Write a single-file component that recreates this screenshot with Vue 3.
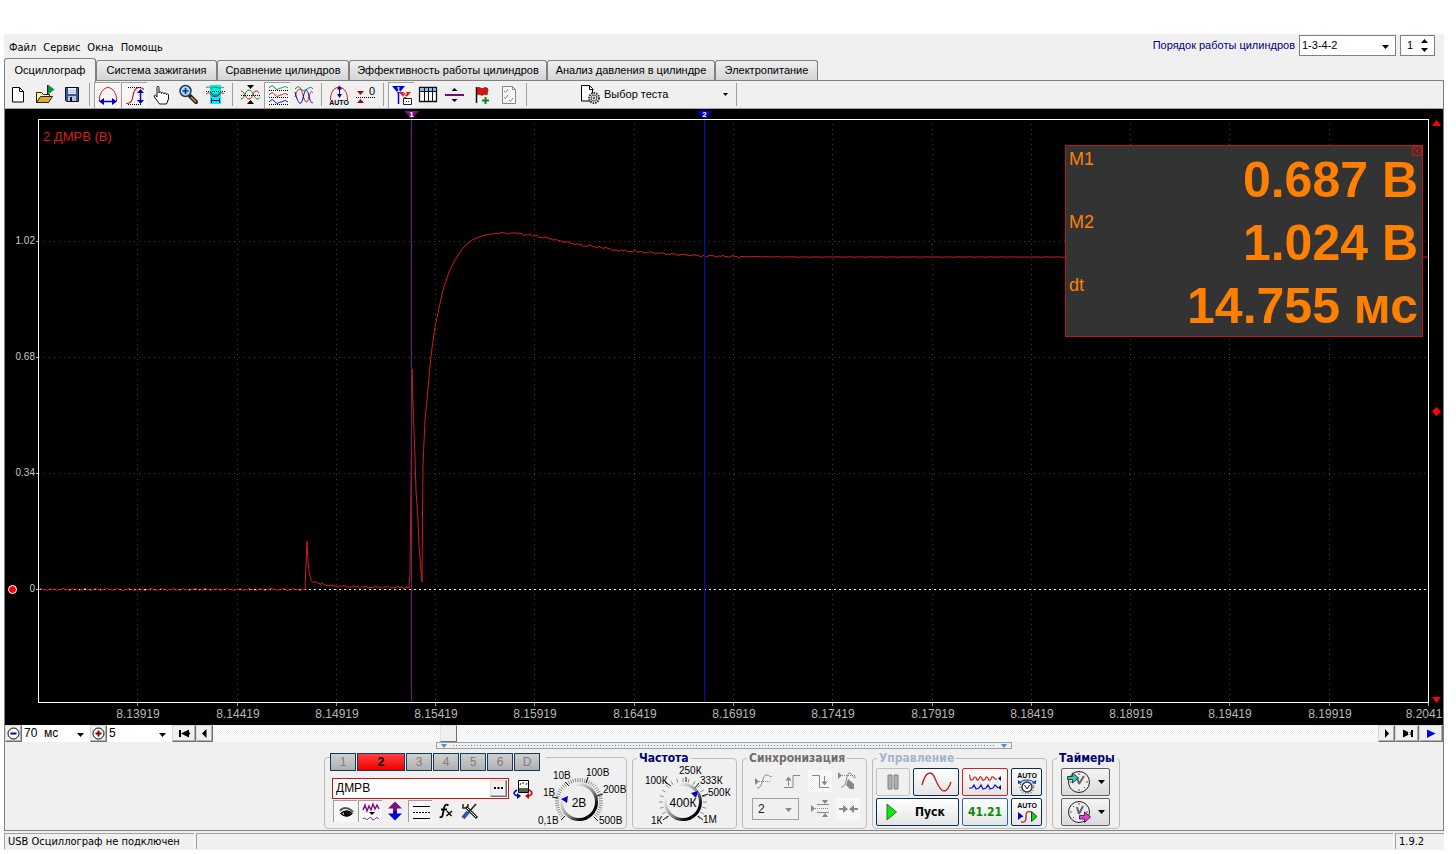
<script setup>
import { ref } from 'vue'

const menu = ['Файл', 'Сервис', 'Окна', 'Помощь']
const tabs = [
  'Осциллограф',
  'Система зажигания',
  'Сравнение цилиндров',
  'Эффективность работы цилиндров',
  'Анализ давления в цилиндре',
  'Электропитание',
]
const activeTab = ref(0)
const channels = ['1', '2', '3', '4', '5', '6', 'D']
const activeChannel = ref('2')
const channelName = ref('ДМРВ')
const cylinder = ref('1')
const scroll = ref(198)

const readings = [
  { label: 'М1', value: '0.687 В' },
  { label: 'М2', value: '1.024 В' },
  { label: 'dt', value: '14.755 мс' },
]

const gridX = [137, 237, 336, 435, 534, 634, 733, 832, 932, 1031, 1130, 1229, 1329, 1428]
const timeLabels = gridX.map((x, i) => {
  const last = i === gridX.length - 1
  return { x: last ? 1424 : x + 1, text: (8.13919 + i * 0.005).toFixed(5).slice(0, last ? 6 : 7) }
})
const levels = [
  { y: 241, text: '1.02' },
  { y: 357, text: '0.68' },
  { y: 473, text: '0.34' },
  { y: 589, text: '0' },
]

const keyPoints = [
  [39, 589.5], [305, 589.5], [306, 565], [307, 541], [308, 562], [309, 571], [311, 580], [313, 582],
  [322, 584], [332, 586], [360, 587], [409, 587.5], [410, 573], [411, 483], [412, 369], [413, 405],
  [415, 457], [416, 490], [418, 520], [419, 545], [421, 570], [422, 582], [423, 465], [425, 420],
  [427, 400], [430, 366], [432, 348], [435, 327], [439, 308], [443, 290], [449, 272], [455, 260],
  [463, 248], [472, 240], [480, 236.5], [490, 234], [495, 233], [518, 233.5], [535, 236],
  [555, 239.5], [565, 242], [583, 245.5], [602, 247.5], [615, 250], [640, 252], [670, 254],
  [705, 256], [735, 256.5], [790, 257], [1428, 257],
]

function buildTrace() {
  const out = []
  for (let k = 0; k < keyPoints.length - 1; k++) {
    const [x0, y0] = keyPoints[k]
    const [x1, y1] = keyPoints[k + 1]
    const flat = Math.abs(y1 - y0) / (x1 - x0) < 0.25
    for (let x = x0; x < x1; x += 2) {
      const y = y0 + ((y1 - y0) * (x - x0)) / (x1 - x0)
      const amp = x > 740 ? 0.3 : 1.3
      const noise = flat ? Math.sin(x * 12.9898) * Math.cos(x * 4.137) * amp : 0
      out.push(`${x},${(y + noise).toFixed(1)}`)
    }
  }
  out.push('1428,257')
  return out.join(' ')
}
const trace = buildTrace()

function ticks(cx, cy, count, r0, r1) {
  const lines = []
  for (let i = 0; i < count; i++) {
    const a = ((135 + (270 * i) / (count - 1)) * Math.PI) / 180
    lines.push({
      x1: cx + Math.cos(a) * r0,
      y1: cy + Math.sin(a) * r0,
      x2: cx + Math.cos(a) * r1,
      y2: cy + Math.sin(a) * r1,
    })
  }
  return lines
}
const voltTicks = ticks(41, 42, 46, 20, 24)
const freqTicks = ticks(45, 42, 19, 20, 24)
</script>

<template>
  <div class="page">
    <header class="menubar">
      <nav class="menu">
        <button v-for="m in menu" :key="m" type="button">{{ m }}</button>
      </nav>
      <div class="order">
        <label for="order">Порядок работы цилиндров</label>
        <span class="combo order-combo">
          <select id="order"><option>1-3-4-2</option></select>
          <svg class="caret" viewBox="0 0 7 4"><path d="M0 0h7L3.500 4z" /></svg>
        </span>
        <span class="spin">
          <input v-model="cylinder" type="text" aria-label="Цилиндр" />
          <span class="spin-buttons">
            <button type="button" aria-label="Больше"><svg viewBox="0 0 7 4"><path d="M0 4h7L3.500 0z" /></svg></button>
            <button type="button" aria-label="Меньше"><svg viewBox="0 0 7 4"><path d="M0 0h7L3.500 4z" /></svg></button>
          </span>
        </span>
      </div>
    </header>

    <div class="tabs" role="tablist">
      <button
        v-for="(t, i) in tabs" :key="t" type="button" role="tab"
        :aria-selected="i === activeTab" :class="{ active: i === activeTab }" @click="activeTab = i"
      >{{ t }}</button>
    </div>

    <main class="frame">
      <div class="toolbar">
        <div class="tools">
          <button type="button" aria-label="Новый">
            <svg viewBox="0 0 24 24"><path d="M6.500 4.500h7l4 4v10.500h-11z" fill="#fff" stroke="#000" /><path d="M13.500 4.500v4h4" fill="none" stroke="#000" /></svg>
          </button>
          <button type="button" aria-label="Открыть">
            <svg viewBox="0 0 24 24"><path d="M3.500 19.500v-10h5l2 2h6v3" fill="#fff3b0" stroke="#222" /><path d="M3.500 19.500l4-6h12l-4 6z" fill="#e0a92c" stroke="#222" /><path d="M15 2v9l6-4.500z" fill="#0a9a3c" stroke="#063" stroke-width=".6" /><path d="M14.500 2v9" stroke="#222" /></svg>
          </button>
          <button type="button" aria-label="Сохранить">
            <svg viewBox="0 0 24 24"><path d="M5.500 4.500h13v14h-12l-1-1z" fill="#3857a0" stroke="#111" /><path d="M8 5h8v6H8z" fill="#e4ecf6" /><path d="M8 7.500h8M8 9.500h8" stroke="#9ab" stroke-width=".6" /><path d="M8 13h8v5H8z" fill="#b8c2cc" /><path d="M10 14h2v4h-2z" fill="#111" /></svg>
          </button>
        </div>
        <i class="sep"></i>
        <div class="tools">
          <button class="on" type="button" aria-label="Автоширина">
            <svg viewBox="0 0 24 24"><path d="M3.500 18c0-3 0-5 1-7s3-6 7.500-6.500c4.500.500 6.500 4.500 7.500 6.500s1 4 1 7" fill="none" stroke="#d01010" /><path d="M5 18.500h14" stroke="#00f" stroke-width="1.500" /><path d="M3 18.500l5-3.500v7zM21 18.500l-5-3.500v7z" fill="#00c" /></svg>
          </button>
          <button class="on" type="button" aria-label="Автовысота">
            <svg viewBox="0 0 24 24"><path d="M3 20.500c6 0 6-3 7-8s3-8 6-8 4 1 5 2" fill="none" stroke="#d01010" stroke-width="1.200" /><path d="M5 4.500h14M5 21.500h14" stroke="#000" stroke-dasharray="1 1" /><path d="M17.500 8v11" stroke="#00f" stroke-width="1.500" /><path d="M17.500 6l-3.500 4h7zM17.500 21l-3.500-4h7z" fill="#00c" /></svg>
          </button>
          <button type="button" aria-label="Рука">
            <svg viewBox="0 0 24 24"><path d="M8 14V4.500c0-1.500 2-1.500 2 0V10c0-1.500 2.500-1.500 2.500.500 0-1.500 2.500-1 2.500.500 0-1.500 2.500-1 2.500.500 0-1 2-1 2 .500V16l-2 5h-7l-5-7c-1-2 1-2.500 2-1z" fill="#fff" stroke="#111" /></svg>
          </button>
          <button type="button" aria-label="Лупа">
            <svg viewBox="0 0 24 24"><path d="M14 13l6 6" stroke="#222" stroke-width="4" stroke-linecap="round" /><path d="M15 14l5 5" stroke="#c8903c" stroke-width="1.500" /><circle cx="9.500" cy="8" r="5.500" fill="#a8d8fa" stroke="#335" stroke-width="1.500" /><path d="M6.500 8h6M9.500 5v6" stroke="#00309a" stroke-width="1.600" /></svg>
          </button>
          <button type="button" aria-label="Масштаб области">
            <svg viewBox="0 0 24 24"><path d="M7 2h11v19H7z" fill="#0ee" /><path d="M3 5c3-3 4 1 6 0s5-1 7 0 3-2 5 0" fill="none" stroke="#078a3a" /><path d="M3 8.500h19" stroke="#000" stroke-dasharray="1 1" /><path d="M3 11c3-2 4-1 5 1s7 2 8 0 3-3 5-1" fill="none" stroke="#d01010" /><path d="M7 8l3 4h5l3-4" fill="none" stroke="#064" /><path d="M8.500 15v5M16.500 15v5M8 17.500h9" stroke="#009" /></svg>
          </button>
        </div>
        <i class="sep"></i>
        <div class="tools">
          <button type="button" aria-label="Совместить по нулю">
            <svg viewBox="0 0 24 24"><path d="M3 8c4 0 4 8 8 8s4-8 7-8 2 2 3 2" fill="none" stroke="#d01010" /><path d="M3 16c4 0 4-9 8-9s5 9 8 9 2-2 3-2" fill="none" stroke="#078a3a" /><path d="M3 12.500h19" stroke="#000" stroke-dasharray="1 1" /><path d="M9 2h7l-3.500 4zM9 21h7l-3.500-4z" /></svg>
          </button>
          <button class="on" type="button" aria-label="Разнести графики">
            <svg viewBox="0 0 24 24"><g fill="none"><path d="M3 5c3-3 4-3 6 0s4 0 6 0 3-3 7 0" stroke="#078a3a" /><path d="M3 12c3-3 4-3 6 0s4 0 6 0 3-3 7 0" stroke="#d01010" /><path d="M3 19c3-3 4-3 6 0s4 0 6 0 3-3 7 0" stroke="#00c" /><path d="M3 7.500h19M3 14.500h19M3 21.500h19" stroke="#000" stroke-dasharray="1 1" /></g></svg>
          </button>
          <button type="button" aria-label="Наложить графики">
            <svg viewBox="0 0 24 24"><g fill="none"><path d="M3 6c3-3 4-3 6 0s4 1 6 0 4-3 6 0" stroke="#078a3a" /><path d="M3 14c3-10 6-10 8-2s4 10 6 2 3-5 4-4" stroke="#d01010" /><path d="M3 9c3 12 6 15 8 6s4-11 6-2 3 6 4 7" stroke="#00c" /></g></svg>
          </button>
        </div>
        <i class="sep"></i>
        <div class="tools">
          <button type="button" aria-label="Автомасштаб">
            <svg viewBox="0 0 24 24"><path d="M3.500 17c0-6 2-12 8.500-13 6.500 1 8.500 7 8.500 13" fill="none" stroke="#d01010" /><path d="M12.500 4v9" stroke="#00c" /><path d="M12.500 2.500l-2.500 4h5zM12.500 15l-2.500-4h5z" fill="#009" /><text x="12" y="22" class="micro">AUTO</text></svg>
          </button>
          <button type="button" aria-label="Уровень нуля">
            <svg viewBox="0 0 24 24"><path d="M3 8h7l-3.500 4zM3 20h7l-3.500-4z" fill="#901010" /><path d="M2 14.500h20" stroke="#000" stroke-dasharray="1 1" /><text x="15" y="12" class="zero">0</text></svg>
          </button>
        </div>
        <i class="sep"></i>
        <div class="tools">
          <button class="on" type="button" aria-label="Маркеры">
            <svg viewBox="0 0 24 24"><path d="M2 3h13L8.500 11z" fill="#00d" /><path d="M8.500 9v12" stroke="#00c" stroke-width="1.500" /><path d="M9 9h12l-6 7z" fill="#e01818" /><path d="M14.500 15v6" stroke="#d01010" /><text x="8.500" y="9" class="micro light">1</text><text x="15" y="14" class="micro light">2</text><path d="M13.500 15.500h8v6h-8z" fill="#fff" stroke="#124" /><path d="M16 18.500h4" stroke="#124" stroke-dasharray="1 1" /></svg>
          </button>
          <button type="button" aria-label="Таблица">
            <svg viewBox="0 0 24 24"><path d="M3.500 4.500h17v14h-17z" fill="#fff" stroke="#111" stroke-width="1.300" /><path d="M4 5h16v3H4z" fill="#8ab8ea" /><path d="M4 8.500h16M8.500 5v13M12.500 5v13M16.500 5v13" stroke="#111" /></svg>
          </button>
          <button type="button" aria-label="Линия уровня">
            <svg viewBox="0 0 24 24"><path d="M2 12h19" stroke="#6b1070" stroke-width="2" /><path d="M8.500 8h6l-3-3zM8.500 16h6l-3 3z" /></svg>
          </button>
          <button type="button" aria-label="Добавить флаг">
            <svg viewBox="0 0 24 24"><path d="M6.500 4v16" stroke="#111" stroke-width="1.500" /><path d="M7 5c3-2 4 2 7 0 2-1 3 0 4 1l-1 6c-3-2-4 1-6 0s-3-1-4 0z" fill="#e01010" stroke="#511" stroke-width=".7" /><path d="M12 17.500h7M15.500 14v7" stroke="#0a8a1a" stroke-width="2" /></svg>
          </button>
          <button type="button" aria-label="Отчёт">
            <svg viewBox="0 0 24 24"><path d="M5.500 3.500h10l3 3v14h-13z" fill="#f6f6f6" stroke="#888" /><path d="M15.500 3.500v3h3M7 8l1.500 1.500L11 6M7 14l1.500 1.500L11 12M12 17l1.500 1.500L16 15" fill="none" stroke="#888" /></svg>
          </button>
        </div>
        <i class="sep"></i>
        <button class="test" type="button" aria-haspopup="listbox">
          <svg class="test-icon" viewBox="0 0 21 21"><path d="M1.500 1.500h8l3 3v12.500h-11z" fill="#fff" stroke="#000" /><path d="M9.500 1.500v4h4" fill="none" stroke="#000" /><circle cx="14" cy="14" r="5" fill="#dde8dd" stroke="#333" stroke-width="2" stroke-dasharray="1.500 1" /><circle cx="14" cy="14" r="3" fill="#cfdccf" stroke="#555" /><circle cx="14" cy="14" r="1" fill="#333" /></svg>
          <span>Выбор теста</span>
          <svg class="caret-small" viewBox="0 0 5 3"><path d="M0 0h5L2.500 3z" /></svg>
        </button>
        <i class="sep"></i>
      </div>

      <section class="scope">
        <svg class="plot" viewBox="5 109 1438 616" role="img" aria-label="Осциллограмма">
          <g shape-rendering="crispEdges">
            <path v-for="x in gridX" :key="x" :d="`M${x + 0.5} 124V702`" stroke="#404040" stroke-dasharray="1 4" />
            <path v-for="l in levels.slice(0, 3)" :key="l.y" :d="`M39 ${l.y + 0.5}H1428`" stroke="#404040" stroke-dasharray="1 4" />
            <path d="M39 589.500H1428" stroke="#fff" stroke-dasharray="2 3" />
            <path v-for="x in gridX" :key="'t' + x" :d="`M${x + 0.5} 703v3`" stroke="#999" />
            <path v-for="l in levels" :key="'l' + l.y" :d="`M36 ${l.y + 0.5}h2`" stroke="#bbb" />
          </g>
          <polyline :points="trace" fill="none" stroke="#d01c1c" />
          <g shape-rendering="crispEdges">
            <path d="M411.500 118V703" stroke="#721c7c" />
            <path d="M704.500 118V703" stroke="#0808c0" />
            <path d="M38.500 119.500H1428.500V702.500H38.500z" fill="none" stroke="#fff" />
          </g>
          <path d="M404 111h15l-7.500 8z" fill="#7a1080" />
          <path d="M697 111h15l-7.500 8z" fill="#0000d8" />
          <text x="411.500" y="117" class="mark">1</text>
          <text x="704.500" y="117" class="mark">2</text>
          <text x="43" y="141" class="channel">2 ДМРВ (В)</text>
          <text v-for="l in levels" :key="'v' + l.y" x="35" :y="l.y + 3" class="level">{{ l.text }}</text>
          <text v-for="t in timeLabels" :key="t.text" :x="t.x" y="718" class="time">{{ t.text }}</text>
          <circle cx="12.500" cy="589.500" r="4" fill="#f00" stroke="#fff" />
          <path d="M1432 126h9l-4.500-6zM1432 697h9l-4.500 6zM1432 411.500l4.500-4.500 4.500 4.500-4.500 4.500z" fill="#f00" />
        </svg>
        <div class="readout">
          <button type="button" aria-label="Закрыть">
            <svg viewBox="0 0 10 10"><path d="M.5 .5h9v9h-9zM1 1l8 8M9 1L1 9" fill="none" stroke="#c01818" /></svg>
          </button>
          <div v-for="r in readings" :key="r.label" class="reading">
            <span>{{ r.label }}</span><strong>{{ r.value }}</strong>
          </div>
        </div>
      </section>

      <div class="navbar">
        <button class="bevel small" type="button" aria-label="Уменьшить">
          <svg viewBox="0 0 13 13"><circle cx="6.500" cy="6.500" r="5.500" fill="#fff" stroke="#000" /><path d="M3.500 6.500h6" stroke="#00007a" stroke-width="2" /></svg>
        </button>
        <span class="combo flat span-combo">
          <select aria-label="Развёртка"><option>70&nbsp; мс</option></select>
          <svg class="caret" viewBox="0 0 7 4"><path d="M0 0h7L3.500 4z" /></svg>
        </span>
        <button class="bevel small" type="button" aria-label="Увеличить">
          <svg viewBox="0 0 13 13"><circle cx="6.500" cy="6.500" r="5.500" fill="#fff" stroke="#000" /><path d="M3.500 6.500h6M6.500 3.500v6" stroke="#8a0000" stroke-width="2" /></svg>
        </button>
        <span class="combo flat gain-combo">
          <select aria-label="Усиление"><option>5</option></select>
          <svg class="caret" viewBox="0 0 7 4"><path d="M0 0h7L3.500 4z" /></svg>
        </span>
        <button class="bevel wide" type="button" aria-label="В начало">
          <svg viewBox="0 0 13 13"><path d="M1 3h2v7H1zM3 6.500L11 2.500v8zM8 5.500h4v2H8z" /></svg>
        </button>
        <button class="bevel small" type="button" aria-label="Назад">
          <svg viewBox="0 0 13 13"><path d="M4 6.500L8.500 2v9z" /></svg>
        </button>
        <input v-model="scroll" class="track" type="range" min="0" max="1000" aria-label="Прокрутка" />
        <button class="bevel small" type="button" aria-label="Вперёд">
          <svg viewBox="0 0 13 13"><path d="M9 6.500L5 2v9z" /></svg>
        </button>
        <button class="bevel wide" type="button" aria-label="В конец">
          <svg viewBox="0 0 13 13"><path d="M10 3h2v7h-2zM10 6.500L2 2.500v8zM7 5.500h3v2H7z" /></svg>
        </button>
        <button class="bevel wide" type="button" aria-label="Воспроизвести">
          <svg viewBox="0 0 13 13"><path d="M2 2.500v8.500L10.500 6.500z" fill="#0000e8" /></svg>
        </button>
      </div>

      <div class="splitter">
        <button type="button" aria-label="Свернуть панель">
          <svg viewBox="0 0 6 4"><path d="M0 0h6L3 4z" /></svg><i></i><svg viewBox="0 0 6 4"><path d="M0 0h6L3 4z" /></svg>
        </button>
      </div>

      <div class="controls">
        <section class="group channel-group">
          <div class="channel-left">
            <div class="channel-tabs">
              <button
                v-for="c in channels" :key="c" type="button"
                :class="{ active: c === activeChannel }" @click="activeChannel = c"
              >{{ c }}</button>
            </div>
            <div class="name-row">
              <span class="name-box">
                <input v-model="channelName" type="text" aria-label="Название канала" />
                <button class="bevel" type="button" aria-label="Выбрать">
                  <svg viewBox="0 0 9 3"><path d="M0 0h2v2H0zM3.500 0h2v2h-2zM7 0h2v2H7z" /></svg>
                </button>
              </span>
              <button class="invert" type="button" aria-label="Инвертировать">
                <svg viewBox="0 0 20 20"><path d="M5.500 1.500h10v12h-10z" fill="#fff" stroke="#000" /><path d="M6 9h9v4H6z" fill="#486848" /><path d="M7 6l1-2M10 5V3M13 6l1-2" stroke="#000" stroke-width=".8" /><path d="M4 11c-4 2-4 5 1 6" fill="none" stroke="#00c" stroke-width="1.500" /><path d="M4 14l4 3-4 3z" fill="#009" /><path d="M16 11c4 2 4 5-1 6" fill="none" stroke="#d00" stroke-width="1.500" /><path d="M16 14l-4 3 4 3z" fill="#c00" /></svg>
              </button>
            </div>
            <div class="channel-tools">
              <button class="on" type="button" aria-label="Видимость">
                <svg viewBox="0 0 24 22"><path d="M6 10c3-4 9-4 13 1" fill="none" stroke="#555" stroke-width="2" /><path d="M7 12.500c3-3 8-3 11 0-3 3.500-8 3.500-11 0z" fill="#ccc" stroke="#000" stroke-width="1.300" /><circle cx="13" cy="12.500" r="3" /></svg>
              </button>
              <button class="on" type="button" aria-label="Фильтр">
                <svg viewBox="0 0 24 22"><path d="M4 9l2-5 2 6 2-5 2 4 2-6 2 5 2-4 2 4" fill="none" stroke="#7a1080" stroke-width="1.400" /><path d="M10 11h6l-3 3z" /><path d="M4 18c2-3 3 2 5 0s3-2 4 0 3 0 4-1 2 0 3 1" fill="none" stroke="#7a1080" /></svg>
              </button>
              <button type="button" aria-label="Смещение">
                <svg viewBox="0 0 24 22"><path d="M12 1.500l7 7h-5V11h-4V8.500H5z" fill="#7a1080" /><path d="M12 20.500l7-7h-5V11h-4v2.500H5z" fill="#0000e0" /></svg>
              </button>
              <button class="on" type="button" aria-label="Уровни">
                <svg viewBox="0 0 24 22"><path d="M4 5.500h17M4 17.500h17" stroke="#000" /><path d="M4 11.500h17" stroke="#000" stroke-dasharray="2 1" /></svg>
              </button>
              <button type="button" aria-label="Функция">
                <svg viewBox="0 0 24 22"><path d="M15.500 5.500c-3-2-4 0-4.500 3l-1.500 7c-.5 2-2 2-2.500 1M8 9.500h6" fill="none" stroke="#000" stroke-width="1.800" /><path d="M14 11l4.500 5M19 11l-5.500 5" stroke="#000" stroke-width="1.300" /></svg>
              </button>
              <button type="button" aria-label="Настройки">
                <svg viewBox="0 0 24 22"><path d="M8 7l11 11" stroke="#222" stroke-width="3" /><path d="M8 7l10 10" stroke="#eee" /><path d="M5 4v4h3l2-2V4" fill="none" stroke="#222" stroke-width="1.500" /><path d="M18 4l-8 9" stroke="#222" stroke-width="1.500" /><path d="M10 12l-5 6" stroke="#3058a8" stroke-width="4" /></svg>
              </button>
            </div>
          </div>
          <svg class="dial volt" viewBox="0 0 88 68" role="img" aria-label="Чувствительность 2В">
            <defs>
              <linearGradient id="rim" x1="0" y1="0" x2="1" y2="1"><stop offset="0.2" stop-color="#eee" /><stop offset="0.55" stop-color="#888" /><stop offset="0.8" stop-color="#000" /></linearGradient>
            </defs>
            <line v-for="(t, i) in voltTicks" :key="i" v-bind="t" stroke="#8c8c8c" />
            <path d="M27 56l-4 4M20 38l-6-1M31 26l-4-4M48 23l2-6M59 36l6-2M56 57l4 4" stroke="#111" fill="none" />
            <circle cx="41" cy="42" r="17.500" fill="#f0f0f0" stroke="url(#rim)" stroke-width="3" />
            <path d="M23 39l7-3-1 7z" fill="#00c" />
            <text x="41" y="47" class="dial-value">2В</text>
            <text x="0" y="64">0,1В</text><text x="5" y="36">1В</text><text x="15" y="19">10В</text>
            <text x="48" y="16">100В</text><text x="65" y="33">200В</text><text x="61" y="64">500В</text>
          </svg>
        </section>

        <fieldset class="group freq">
          <legend>Частота</legend>
          <svg class="dial" viewBox="0 0 96 68" role="img" aria-label="Частота 400К">
            <line v-for="(t, i) in freqTicks" :key="i" v-bind="t" stroke="#8c8c8c" />
            <path d="M30 56l-5 4M33 26l-6-4M48 22v-5M57 28l4-5M64 36l6-2M60 56l5 4" stroke="#111" fill="none" />
            <circle cx="45" cy="42" r="17.500" fill="#f0f0f0" stroke="url(#rim)" stroke-width="3" />
            <path d="M53 33l7-2-2 7z" fill="#00c" />
            <text x="45" y="47" class="dial-value">400К</text>
            <text x="13" y="64">1К</text><text x="7" y="24">100К</text><text x="41" y="14">250К</text>
            <text x="62" y="24">333К</text><text x="70" y="36">500К</text><text x="65" y="63">1М</text>
          </svg>
        </fieldset>

        <fieldset class="group sync" disabled>
          <legend>Синхронизация</legend>
          <div class="sync-grid">
            <button type="button" aria-label="Автоматическая">
              <svg viewBox="0 0 24 22"><path d="M3 8v7l4-3.500zM3 11.500h2" fill="#888" /><path d="M7 11.500h12" stroke="#888" stroke-dasharray="1 1" /><path d="M5 18c6 1 5-13 9-13s4 3 6 1" fill="none" stroke="#888" /></svg>
            </button>
            <button type="button" aria-label="По фронту">
              <svg viewBox="0 0 24 22"><path d="M4 17.500h9v-12h7" fill="none" stroke="#888" /><path d="M8.500 16V9" stroke="#888" /><path d="M5.500 10.500l3-4 3 4z" fill="#888" /></svg>
            </button>
            <button class="on" type="button" aria-label="По спаду">
              <svg viewBox="0 0 24 22"><path d="M4 5.500h7.500v12H21" fill="none" stroke="#888" /><path d="M16.500 6v8" stroke="#888" /><path d="M13.500 11.500h6l-3 4z" fill="#888" /></svg>
            </button>
            <button type="button" aria-label="Ручная">
              <svg viewBox="0 0 24 22"><path d="M2 2v7l4-3.500z" fill="#888" /><path d="M6 5.500h14" stroke="#888" stroke-dasharray="1 1" /><path d="M5 17c6 1 5-13 8-14s3 6 7 4" fill="none" stroke="#888" /><path d="M12 9l6 5v5h-4l-4-4z" fill="#888" /></svg>
            </button>
            <span class="combo sync-combo">
              <select aria-label="Канал синхронизации"><option>2</option></select>
              <svg class="caret" viewBox="0 0 7 4"><path d="M0 0h7L3.500 4z" /></svg>
            </span>
            <button type="button" aria-label="Гистерезис">
              <svg viewBox="0 0 24 22"><path d="M3 7v7l4-3.500zM14 2h6l-3 4zM14 19h6l-3-4z" fill="#888" /><path d="M9 6.500h12M9 14.500h12" stroke="#888" /><path d="M7 10.500h13" stroke="#888" stroke-dasharray="1 1" /></svg>
            </button>
            <button class="on" type="button" aria-label="Центр">
              <svg viewBox="0 0 24 22"><path d="M3 10h4V7l5 4-5 4v-3H3zM22 10h-4V7l-5 4 5 4v-3h4z" fill="#888" /></svg>
            </button>
          </div>
        </fieldset>

        <fieldset class="group run">
          <legend class="pale">Управление</legend>
          <div class="run-grid">
            <button class="pause" type="button" aria-label="Пауза">
              <svg viewBox="0 0 12 16"><path d="M1 1h4v14H1zM7 1h4v14H7z" fill="#b0b0b0" stroke="#808080" /></svg>
            </button>
            <button type="button" aria-label="Один кадр">
              <svg class="wide-icon" viewBox="0 0 36 22"><path d="M4 14C7 4 9 2 12 2c4 0 5 6 7 10s4 8 7 8 5-3 7-9" fill="none" stroke="#c01818" stroke-width="1.300" /></svg>
            </button>
            <button class="red" type="button" aria-label="Непрерывно">
              <svg class="wide-icon" viewBox="0 0 36 22"><path d="M2 4c2 0 0 6 3 5s1-3 3-3 1 4 3 3 1-4 3-3 0 4 3 3 1-4 3-3 1 4 3 3 1-4 3-3 1 3 4 2" fill="none" stroke="#d01818" stroke-width="1.200" /><path d="M2 17h3l2-3 2 4 3-1 2-3 2 4 3-1 2-3 2 4 3-1 2-3 3 3" fill="none" stroke="#1010c0" stroke-width="1.200" /><path d="M34 5v5l-3-2.500zM34 14v5l-3-2.500z" fill="#114" /></svg>
            </button>
            <button type="button" aria-label="Авто напряжение">
              <svg viewBox="0 0 24 24"><text x="12" y="8" class="micro">AUTO</text><circle cx="12" cy="17" r="5" fill="#fff" stroke="#333" stroke-width="1.500" /><circle cx="12" cy="17" r="7" fill="none" stroke="#222" stroke-dasharray="1 2" /><path d="M9.500 15l2.500 4 2.500-4" fill="none" stroke="#00c" /><path d="M4 13c3-4 13-4 16 0" fill="none" stroke="#04c" /><path d="M3 14v-4l4 3zM21 14v-4l-4 3z" fill="#04c" /></svg>
            </button>
            <button class="start" type="button">
              <svg viewBox="0 0 12 18"><path d="M1 1l9.500 8L1 17z" fill="#00f000" stroke="#486048" /></svg><span>Пуск</span>
            </button>
            <button class="rate" type="button">41.21</button>
            <button type="button" aria-label="Авто запуск">
              <svg viewBox="0 0 24 24"><text x="12" y="8" class="micro">AUTO</text><path d="M6 22c6 1 5-4 5-7s2-4 5-3" fill="none" stroke="#c01818" stroke-width="1.300" /><path d="M3 12l5 4-5 4z" fill="#00c" /><path d="M3 16.500h5" stroke="#00c" /><path d="M16.500 11.500l5.500 5-5.500 5z" fill="#0d0" stroke="#243" /></svg>
            </button>
          </div>
        </fieldset>

        <fieldset class="group timers">
          <legend>Таймеры</legend>
          <div class="timer-list">
            <button type="button" aria-haspopup="menu" aria-label="Таймер запуска">
              <svg class="clock" viewBox="0 0 26 24"><circle cx="13" cy="12" r="10.500" fill="#eee" stroke="#222" /><path d="M13 3v2M13 19v2M4 12h2M20 12h2M7 6l1 1M18 17l1 1" stroke="#555" /><path d="M13 14l-2-7M13 14l5-8" stroke="#666" stroke-width="2" /><path d="M1.500 6.500h5V3l6 5-6 5V9.500h-5z" fill="#40c0c0" stroke="#243" /></svg>
              <svg class="caret" viewBox="0 0 7 4"><path d="M0 0h7L3.500 4z" /></svg>
            </button>
            <button type="button" aria-haspopup="menu" aria-label="Таймер остановки">
              <svg class="clock" viewBox="0 0 26 24"><circle cx="13" cy="12" r="10.500" fill="#eee" stroke="#222" /><path d="M13 3v2M4 12h2M20 12h2M7 6l1 1M7 18l1-1" stroke="#555" /><path d="M13 14l-2-7M13 14l4-8" stroke="#666" stroke-width="2" /><path d="M13.500 15.500h5V12l6 5-6 5.500v-3.500h-5z" fill="#e040d8" stroke="#424" /></svg>
              <svg class="caret" viewBox="0 0 7 4"><path d="M0 0h7L3.500 4z" /></svg>
            </button>
          </div>
        </fieldset>
      </div>
    </main>

    <footer class="status">
      <span>USB Осциллограф не подключен</span>
      <span></span>
      <span>1.9.2</span>
    </footer>
  </div>
</template>

<style>
body {
  background: #fff;
}
</style>

<style scoped>
.page {
  margin: 34px 12px 0 4px;
  background: #f0f0f0;
  color: #000;
  font: 11px/13px "Liberation Sans", Arial, sans-serif;
}
.page *,
.page *::before {
  box-sizing: border-box;
}
button,
select,
input {
  margin: 0;
  padding: 0;
  border: 0;
  border-radius: 0;
  background: none;
  color: inherit;
  font: inherit;
  outline: 0;
}
select {
  appearance: none;
}
svg {
  display: block;
  flex: none;
}

.menubar {
  display: flex;
  justify-content: space-between;
  align-items: flex-start;
  height: 24px;
}
.menu {
  display: flex;
  gap: 7px;
  padding: 7px 5px;
  font-family: "DejaVu Sans Condensed", "DejaVu Sans", sans-serif;
}
.order {
  display: flex;
  align-items: center;
  gap: 4px;
  padding: 1px 9px 0 0;
}
.order label {
  color: #000080;
}
.combo {
  position: relative;
  display: block;
  border: 1px solid #808080;
  background: #fff;
}
.combo select {
  display: block;
  width: 100%;
  height: 100%;
  padding-left: 2px;
}
.combo .caret {
  position: absolute;
  right: 6px;
  top: 50%;
  margin-top: -1px;
  pointer-events: none;
}
.caret {
  width: 7px;
  height: 4px;
}
.order-combo {
  width: 97px;
  height: 21px;
}
.spin {
  display: flex;
  align-items: center;
  width: 35px;
  height: 21px;
  border: 1px solid #808080;
  background: #fff;
}
.spin input {
  width: 20px;
  padding-left: 6px;
}
.spin-buttons {
  display: grid;
  gap: 5px;
}
.spin-buttons svg {
  width: 7px;
  height: 4px;
}

.tabs {
  display: grid;
  grid-template-columns: 92px 120px 131px 197px 167px 102px;
  column-gap: 1px;
  align-items: end;
  height: 22px;
}
.tabs button {
  height: 20px;
  margin-left: -1px;
  border: 1px solid #808080;
  border-bottom: 0;
  border-radius: 3px 3px 0 0;
  background: linear-gradient(#f0f0f0, #d4d4d4);
  white-space: nowrap;
}
.tabs .active {
  height: 24px;
  margin: 0 0 -2px;
  background: #f0f0f0;
  z-index: 1;
}

.frame {
  border: 1px solid #808080;
}
.toolbar {
  display: flex;
  align-items: center;
  height: 28px;
  border-bottom: 1px solid #a0a0a0;
}
.tools {
  display: flex;
  gap: 1px;
}
.tools button,
.channel-tools button,
.sync-grid button {
  display: grid;
  place-items: center;
  width: 26px;
  height: 26px;
}
.tools svg {
  width: 24px;
  height: 24px;
}
.tools .on,
.channel-tools .on {
  border-left: 1px solid #a0a0a0;
  border-top: 1px solid #a0a0a0;
}
.tools .on,
.channel-tools .on,
.sync-grid .on {
  background: repeating-conic-gradient(#fff 0 25%, #f0f0f0 0 50%) 0 0 / 2px 2px;
}
.sep {
  width: 9px;
  height: 23px;
  background: linear-gradient(#a0a0a0, #a0a0a0) 4px 0 / 1px 100% no-repeat;
}
.micro {
  font: 700 7px "Liberation Sans", Arial, sans-serif;
  text-anchor: middle;
}
.zero {
  font-size: 11px;
}
.light {
  fill: #fff;
}
.test {
  display: flex;
  align-items: center;
  gap: 3px;
  width: 152px;
  height: 24px;
  margin-left: 49px;
}
.test-icon {
  width: 21px;
  height: 21px;
}
.caret-small {
  width: 5px;
  height: 3px;
  margin-left: auto;
  margin-right: 4px;
}

.scope {
  position: relative;
  background: #000;
}
.plot {
  width: 100%;
  height: auto;
  overflow: hidden;
  font-family: "Liberation Sans", Arial, sans-serif;
}
.mark {
  fill: #fff;
  font-size: 8px;
  font-weight: 700;
  text-anchor: middle;
}
.channel {
  fill: #d81c1c;
  font-size: 13px;
}
.level {
  fill: #c8c8c8;
  font-size: 10px;
  text-anchor: end;
}
.time {
  fill: #b8b8b8;
  font-size: 12px;
  text-anchor: middle;
}
.readout {
  position: absolute;
  top: 36px;
  right: 20px;
  width: 358px;
  border: 1px solid #c01818;
  background: #333;
  color: #ff8000;
  font-size: 18px;
  line-height: 24px;
}
.readout button {
  position: absolute;
  top: 0;
  right: 0;
}
.readout button svg {
  width: 10px;
  height: 10px;
}
.reading {
  display: flex;
  justify-content: space-between;
  height: 63px;
  padding: 1px 4px 0 3px;
}
.reading:last-child {
  height: 64px;
}
.reading strong {
  font-size: 50px;
  line-height: 66px;
}

.navbar {
  display: flex;
  align-items: stretch;
  height: 17px;
  background: #fff;
}
.bevel {
  display: grid;
  place-items: center;
  flex: none;
  border: 1px solid;
  border-color: #d8d8d8 #707070 #707070 #d8d8d8;
  background: #f0f0f0;
  box-shadow: inset -1px -1px #b0b0b0;
}
.navbar .bevel svg {
  width: 13px;
  height: 13px;
}
.small {
  width: 17px;
}
.wide {
  width: 24px;
}
.flat {
  border: 0;
  font-size: 12px;
}
.span-combo {
  width: 68px;
}
.gain-combo {
  width: 65px;
}
.flat .caret {
  right: 6px;
}
.track {
  appearance: none;
  flex: 1;
  min-width: 0;
  height: 17px;
  background: repeating-conic-gradient(#fff 0 25%, #f0f0f0 0 50%) 0 0 / 2px 2px;
}
.track::-webkit-slider-thumb {
  appearance: none;
  width: 17px;
  height: 17px;
  border: 1px solid;
  border-color: #e0e0e0 #707070 #707070 #e0e0e0;
  background: #f0f0f0;
}
.splitter {
  display: flex;
  justify-content: center;
  height: 7px;
}
.splitter button {
  display: flex;
  align-items: center;
  gap: 6px;
  width: 40%;
  height: 7px;
  padding: 0 4px;
  border: 1px solid #a0a0a0;
}
.splitter svg {
  width: 6px;
  height: 4px;
  fill: #3a94e8;
}
.splitter i {
  flex: 1;
  height: 1px;
  background: repeating-linear-gradient(90deg, #3a94e8 0 1px, transparent 1px 3px);
}

.controls {
  display: flex;
  justify-content: center;
  gap: 5px;
  height: 81px;
  padding: 2px 4px 0 0;
}
.group {
  min-width: 0;
  height: 78px;
  margin: 0;
  padding: 0;
  border: 1px solid #bcbcbc;
  border-radius: 4px;
}
legend {
  margin-left: 4px;
  padding: 0 2px;
  color: #000070;
  font: 700 12px/15px "DejaVu Sans Condensed", "DejaVu Sans", sans-serif;
}
.channel-group {
  display: flex;
  width: 303px;
  height: 72px;
  margin-top: 6px;
}
.channel-left {
  width: 216px;
  margin-top: -5px;
  padding-left: 5px;
}
.channel-tabs {
  display: flex;
  gap: 1px;
  width: 216px;
  background: #f0f0f0;
}
.channel-tabs button {
  width: 26px;
  height: 18px;
  border: 1px solid #15395c;
  background: linear-gradient(#d0d0d0, #b0b0b0);
  color: #808080;
  font-size: 12px;
}
.channel-tabs .active {
  width: 48px;
  background: linear-gradient(#ff4040, #f00000);
  color: #000;
  font-weight: 700;
}
.name-row {
  display: flex;
  align-items: center;
  gap: 4px;
  margin: 7px 0 1px 2px;
}
.name-box {
  display: flex;
  width: 177px;
  height: 21px;
  padding: 1px;
  border: 1px solid #c01818;
  background: #fff;
}
.name-box input {
  flex: 1;
  min-width: 0;
  padding-left: 2px;
  font-size: 12px;
}
.name-box button {
  width: 17px;
}
.name-box svg {
  width: 9px;
  height: 3px;
}
.invert svg {
  width: 20px;
  height: 20px;
}
.channel-tools {
  display: flex;
  gap: 1px;
  margin-left: 3px;
}
.channel-tools button,
.sync-grid button {
  width: 24px;
  height: 22px;
}
.channel-tools svg,
.sync-grid button svg {
  width: 24px;
  height: 22px;
}
.dial {
  width: 96px;
  height: 68px;
  overflow: visible;
  font-size: 10px;
}
.dial-value {
  font-size: 12px;
  text-anchor: middle;
}
.volt {
  width: 88px;
  margin-top: 2px;
  margin-left: -3px;
}
.freq {
  width: 105px;
}
.freq .dial {
  margin: -6px 0 0 5px;
}
.sync {
  width: 125px;
}
.sync legend {
  color: #6e6e6e;
}
.sync-grid {
  display: grid;
  grid-template-columns: 24px 24px 24px 24px;
  gap: 6px 4px;
  padding: 4px 0 0 9px;
}
.sync-combo {
  grid-column: span 2;
  width: 47px;
  height: 22px;
  border-color: #a0a0a0;
  background: #f0f0f0;
  font-size: 12px;
}
.sync-combo select {
  padding-left: 5px;
  opacity: 1;
  color: #222;
}
.sync-combo .caret {
  fill: #888;
}
.run {
  width: 175px;
}
legend.pale {
  color: #a4b6cc;
}
.run-grid {
  display: grid;
  grid-template-columns: 34px 46px 46px 31px;
  grid-auto-rows: 28px;
  gap: 2px 3px;
  padding: 2px 0 0 3px;
}
.run-grid button,
.timer-list button {
  display: flex;
  align-items: center;
  justify-content: center;
  border: 1px solid #0a2e50;
  border-radius: 2px;
  background: linear-gradient(#fff, #e4e4e4);
}
.run-grid svg {
  width: 24px;
  height: 24px;
}
.run-grid .wide-icon {
  width: 36px;
  height: 22px;
}
.run-grid .pause {
  border-color: #c0c0c0;
  background: #f0f0f0;
}
.run-grid .pause svg {
  width: 12px;
  height: 16px;
}
.run-grid .red {
  border-color: #d02020;
}
.run-grid .start {
  grid-column: span 2;
  justify-content: flex-start;
  gap: 17px;
  padding-left: 9px;
  font: 700 12px/14px "DejaVu Sans Condensed", "DejaVu Sans", sans-serif;
}
.run-grid .start svg {
  width: 12px;
  height: 18px;
}
.run-grid .rate {
  border-color: #2a6aa0;
  color: #0a8a0a;
  font: 700 12px/14px "DejaVu Sans Condensed", "DejaVu Sans", sans-serif;
}
.timers {
  width: 68px;
}
.timer-list {
  display: grid;
  grid-auto-rows: 28px;
  gap: 2px;
  padding: 2px 9px 0 8px;
}
.timer-list button {
  gap: 6px;
  border-color: #606060;
  background: linear-gradient(#f4f4f4, #dadada);
}
.clock {
  width: 26px;
  height: 24px;
}

.status {
  display: grid;
  grid-template-columns: 190px 1fr 49px;
  column-gap: 2px;
  padding: 2px 0 1px;
  font: 11px/15px "DejaVu Sans Condensed", "DejaVu Sans", sans-serif;
}
.status span {
  height: 16px;
  padding-left: 3px;
  border: 1px solid #a0a0a0;
  border-width: 1px 0 0 1px;
  box-shadow: 1px 0 #fff;
}
</style>
